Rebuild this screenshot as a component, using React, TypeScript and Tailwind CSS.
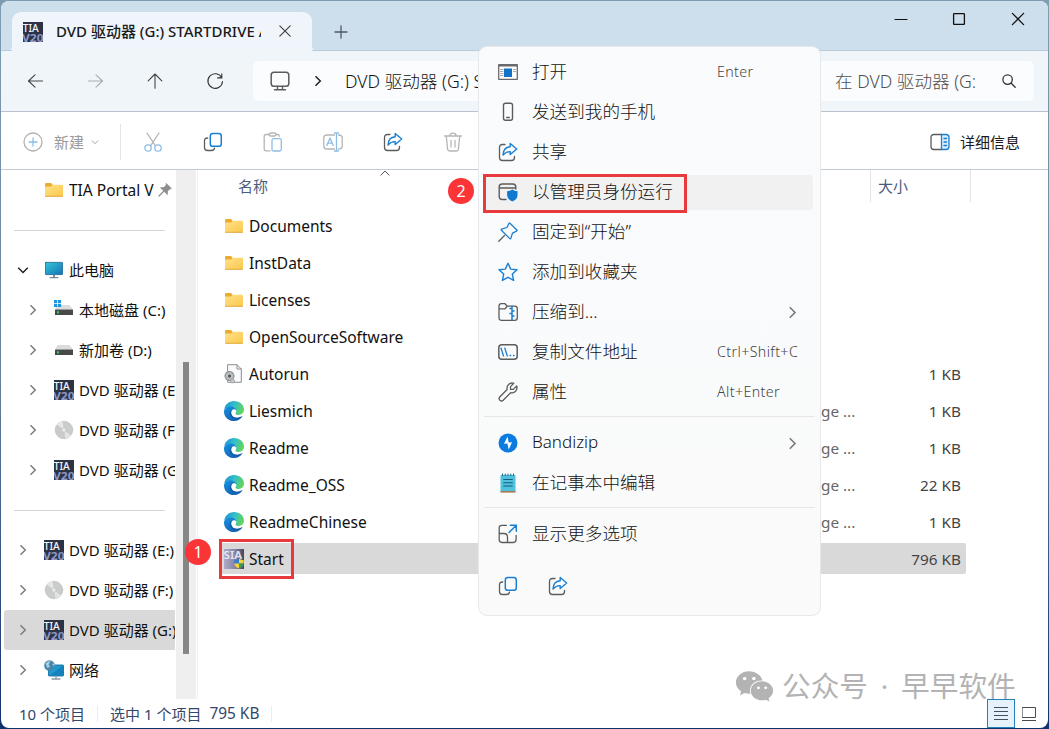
import type { ReactNode } from "react"
import { FaWeixin } from "react-icons/fa"

const BLUE = "#1a7fd0"
const GRAY = "#5c5c5c"

interface IconProps {
  w?: number
  h?: number
  className?: string
  children: ReactNode
}

// Stroke icon, one unit per pixel
function Icon({ w = 20, h = 20, className, children }: IconProps) {
  return (
    <svg
      width={w}
      height={h}
      viewBox={`0 0 ${w} ${h}`}
      fill="none"
      stroke={GRAY}
      strokeWidth="1.3"
      strokeLinecap="round"
      strokeLinejoin="round"
      className={`block shrink-0 ${className ?? ""}`}
    >
      {children}
    </svg>
  )
}

function TiaIcon() {
  return (
    <Icon>
      <rect width="20" height="20" fill="#2c3347" stroke="none" />
      <text x="-0.3" y="9.800" fontSize="10.500" fontWeight="500" fontFamily="Noto Sans, sans-serif" fill="#f4f6fa" stroke="none" textLength="16" lengthAdjust="spacingAndGlyphs">TIA</text>
      <text x="-1" y="19.600" fontSize="11" fontWeight="700" fontFamily="Noto Sans, sans-serif" fill="#8c98c6" stroke="none" textLength="21.500" lengthAdjust="spacingAndGlyphs">V20</text>
    </Icon>
  )
}

function FolderIcon() {
  return (
    <Icon w={18} h={16}>
      <defs>
        <linearGradient id="folder" x1="0" y1="0" x2="1" y2="1">
          <stop offset="0" stopColor="#ffe08a" />
          <stop offset="1" stopColor="#fbc94c" />
        </linearGradient>
      </defs>
      <path d="M0 2.2Q0 1 1.2 1H6l1.6 1.8V6H0z" fill="#e9ac2c" stroke="none" />
      <path d="M0 4.6h6l1.8-1.8h9q1.2 0 1.2 1.2v9.3q0 1.2-1.2 1.2H1.2Q0 14.500 0 13.300z" fill="url(#folder)" stroke="none" />
      <path d="M.5 14.300h17" stroke="#dfa336" strokeWidth="0.900" />
    </Icon>
  )
}

function EdgeIcon() {
  return (
    <Icon>
      <defs>
        <linearGradient id="edge-top" x1="0" y1="0.200" x2="1" y2="0.500">
          <stop offset="0" stopColor="#1c93d6" />
          <stop offset="0.500" stopColor="#35bfc9" />
          <stop offset="1" stopColor="#63d65a" />
        </linearGradient>
        <linearGradient id="edge-low" x1="0" y1="0" x2="0.600" y2="1">
          <stop offset="0" stopColor="#1592df" />
          <stop offset="1" stopColor="#1461b4" />
        </linearGradient>
      </defs>
      <path d="M.2 8.500C1 3.500 5 0 10 0c5.800 0 10 4 10 8.500 0 3.200-2.400 5.400-5.300 5.400-2 0-3.300-.7-3.300-1.500 0-.6.900-.9.900-2.400C12.300 7.600 9.800 6 7 6 4 6 1.400 7.200.2 8.500z" fill="url(#edge-top)" stroke="none" />
      <path d="M0 10.200C.4 7.400 3.400 5.400 6.800 5.400c3 0 5.500 1.700 5.500 4.200C11.500 8.300 10.300 7.900 9.300 8.300 7.700 9 6.900 10.600 7.200 12.400c.5 2.900 3.200 4.500 6.300 4.300 2-.1 3.800-.9 5.200-2C17.200 17.900 14 20 10 20 4.300 20-.3 15.500 0 10.200z" fill="url(#edge-low)" stroke="none" />
      <path d="M9.300 8.300C7.700 9 6.900 10.600 7.200 12.400c.5 2.900 3.200 4.500 6.300 4.300 2-.1 3.800-.9 5.200-2-2.400 3.200-7.600 4.400-11 1.600C4.800 13.800 5 9.600 9.300 8.300z" fill="#104f98" fillOpacity="0.700" stroke="none" />
    </Icon>
  )
}

function SetupFileIcon() {
  return (
    <Icon>
      <path d="M4 .7h9L17.300 5v13.300H4z" fill="#fafafa" stroke="#8d8d8d" strokeWidth="1" />
      <path d="M13 .7V5h4.300" stroke="#8d8d8d" strokeWidth="1" />
      <circle cx="5.500" cy="12" r="4.400" fill="#b9bdbf" stroke="#8f9496" strokeDasharray="2 1.200" />
      <circle cx="5.500" cy="12" r="1.500" fill="#4d5356" stroke="none" />
      <circle cx="8.500" cy="17" r="2" fill="#c7cacb" stroke="#9a9fa1" strokeWidth="0.800" />
    </Icon>
  )
}

function StartIcon() {
  return (
    <Icon>
      <defs>
        <linearGradient id="sia" x1="0" x2="1">
          <stop offset="0" stopColor="#adabc9" />
          <stop offset="0.550" stopColor="#8683a5" />
          <stop offset="1" stopColor="#45465c" />
        </linearGradient>
      </defs>
      <rect width="20" height="20" fill="url(#sia)" stroke="none" />
      <text x="-0.500" y="9.800" fontSize="10.500" fontWeight="600" fontFamily="Noto Sans, sans-serif" fill="#e6e6f2" stroke="none" textLength="18.500" lengthAdjust="spacingAndGlyphs">SIA</text>
      <path d="M15 9.500v5h-4.700v-3.200Q13 11.200 15 9.500z" fill="#2f7fd0" stroke="none" />
      <path d="M15 9.500v5h4.700v-3.200Q17 11.200 15 9.500z" fill="#f5d33c" stroke="none" />
      <path d="M15 19.500v-5h-4.700Q10.800 18 15 19.500z" fill="#f5d33c" stroke="none" />
      <path d="M15 19.500v-5h4.700Q19.200 18 15 19.500z" fill="#3f9b5a" stroke="none" />
    </Icon>
  )
}

function MonitorIcon() {
  return (
    <Icon w={18} h={18}>
      <defs>
        <linearGradient id="screen" x1="0" y1="0" x2="1" y2="1">
          <stop offset="0" stopColor="#35c6d6" />
          <stop offset="1" stopColor="#1173b8" />
        </linearGradient>
      </defs>
      <rect x="0.400" y="1.400" width="17.200" height="12.200" rx="0.600" fill="url(#screen)" stroke="#17618f" strokeWidth="0.800" />
      <path d="M9 14v2" stroke="#7b8b96" strokeWidth="2" strokeLinecap="butt" />
      <path d="M5 16.600h8" stroke="#7b8b96" strokeWidth="1.200" />
    </Icon>
  )
}

function DriveIcon({ windows }: { windows?: boolean }) {
  return (
    <Icon>
      <path d="M3.500 5h12l3.500 4.600H1z" fill="#dcdcdc" stroke="none" />
      {windows && (
        <path d="M0 0h3.200v3.200H0zM3.900 0h3.200v3.200H3.900zM0 3.900h3.200v3.200H0zM3.900 3.900h3.200v3.200H3.900z" fill="#2196e0" stroke="none" />
      )}
      <rect x="1" y="9.500" width="18" height="5.500" rx="0.600" fill="#47494a" stroke="none" />
      <rect x="3" y="11.300" width="2" height="2" fill="#45d255" stroke="none" />
    </Icon>
  )
}

function DiscIcon() {
  return (
    <Icon>
      <circle cx="10" cy="10" r="8.800" fill="#c9cccb" stroke="#bbbdbc" strokeWidth="0.600" />
      <path d="M10 10 3 4.600A8.800 8.800 0 0 1 8.500 1.300z" fill="#e6e8e7" stroke="none" />
      <path d="m10 10 7 5.400a8.800 8.800 0 0 1-5.500 3.300z" fill="#e2e4e3" stroke="none" />
      <circle cx="10" cy="10" r="2.300" fill="#e9ebea" stroke="#bfc2c1" strokeWidth="0.700" />
    </Icon>
  )
}

function NetworkIcon() {
  return (
    <Icon>
      <rect x="4.500" y="5" width="15" height="11" rx="0.600" fill="#1b9bd0" stroke="#16719f" strokeWidth="0.900" />
      <path d="M19 5.500v10H6z" fill="#1580ba" stroke="none" />
      <path d="M12 16.500V18M8 19h8" stroke="#8a9ba5" />
      <circle cx="5.500" cy="5.500" r="5.300" fill="#4787ab" stroke="none" />
      <path d="M1.500 3.500Q4 .6 6.500 1L4.600 4.400 6 6.600 3.500 8.200z" fill="#a8d4e2" stroke="none" />
      <path d="m8 4 2.300-.6v3z" fill="#9bcbdd" stroke="none" />
    </Icon>
  )
}

function CopyIcon() {
  return (
    <Icon>
      <path d="M4.700 6H4.300Q1.500 6 1.500 8.800v6.700Q1.500 18.500 4.500 18.500h4q2.600 0 3-2.300" />
      <rect x="7.300" y="1.500" width="11" height="12.800" rx="2.600" stroke={BLUE} strokeWidth="1.500" />
    </Icon>
  )
}

function ShareIcon() {
  return (
    <Icon>
      <path d="M7 2.500H4.500q-3 0-3 3v10q0 3 3 3h9q3 0 3-3v-1" />
      <path d="M12.200 1.500 18.700 7l-6.500 5.500V9.600C9.300 9.500 7 10.600 5 13 5.200 8.500 7.800 5 12.200 4.700z" stroke={BLUE} strokeWidth="1.400" />
    </Icon>
  )
}

function Chevron({ dir, color = "#7a7a7a", size = 12 }: { dir: "right" | "down"; color?: string; size?: number }) {
  return (
    <svg width={size} height={size} viewBox="0 0 12 12" fill="none" stroke={color} strokeWidth="1.500" className="block shrink-0">
      <path d={dir === "right" ? "M3.500 1.200 8.300 6 3.500 10.800" : "M1.200 3.700 6 8.500l4.800-4.800"} />
    </svg>
  )
}

function TitleBar() {
  return (
    <div className="flex h-[50px] shrink-0 justify-between border-b border-[#bccbdb] bg-[#cddeec]">
      <div className="flex pl-[7px] pt-[11px]">
        <Icon w={4} h={4} className="self-end"><path d="M4 0v4H0Q4 4 4 0z" fill="#f0f5fb" stroke="none" /></Icon>
        <div className="flex h-[39px] w-[300px] items-center rounded-t-[9px] bg-[#f0f5fb] pl-[11px]">
          <TiaIcon />
          <span className="ml-[13px] w-[205px] overflow-hidden whitespace-nowrap pb-[2px] text-[15px] font-medium leading-5 text-[#1b1b1b]">
            DVD 驱动器 (G:) STARTDRIVE Advanced
          </span>
          <Icon w={12} h={12} className="mb-px ml-[18px]">
            <path d="m.8.800 10.400 10.400M11.200.800.800 11.200" stroke="#3c3c3c" strokeWidth="1.100" />
          </Icon>
        </div>
        <Icon w={4} h={4} className="self-end"><path d="M0 0v4h4Q0 4 0 0z" fill="#f0f5fb" stroke="none" /></Icon>
        <Icon w={14} h={14} className="ml-[18px] mt-[13px]">
          <path d="M7 1v12M1 7h12" stroke="#4f5a65" />
        </Icon>
      </div>
      <div className="flex items-start pr-[23px] pt-[11px]">
        <Icon w={14} h={14} className="mr-[44px]">
          <path d="M1 7.500h12" stroke="#111" strokeWidth="1" />
        </Icon>
        <Icon w={14} h={14} className="mr-[45px]">
          <rect x="1.600" y="1.600" width="10.800" height="10.800" rx="0.600" stroke="#111" strokeWidth="1.300" />
        </Icon>
        <Icon w={14} h={14}>
          <path d="m1.400 1.400 11.200 11.200M12.600 1.400 1.400 12.600" stroke="#111" />
        </Icon>
      </div>
    </div>
  )
}

function NavBar() {
  return (
    <div className="flex h-[61px] shrink-0 items-center border-b border-[#b9c3cf] bg-[#f0f5fa] pl-[26px] pr-[14px]">
      <Icon w={16} h={16}><path d="M15.500 8H1.500M8 1.800 1.500 8 8 14.200" stroke="#444" strokeWidth="1.100" /></Icon>
      <Icon w={16} h={16} className="ml-[45px]"><path d="M.5 8h14M8 1.800 14.500 8 8 14.200" stroke="#a9adb1" strokeWidth="1.100" /></Icon>
      <Icon w={16} h={16} className="ml-[43px]"><path d="M8 15.300V1M1.200 7.800 8 1l6.800 6.800" stroke="#444" strokeWidth="1.100" /></Icon>
      <Icon w={18} h={18} className="ml-[43px]">
        <path d="M15.600 5.500A7.300 7.300 0 1 0 16.500 9.500M15.800 1.800v4.100h-4.200" stroke="#333" strokeWidth="1.100" />
      </Icon>
      <div className="ml-[29px] flex h-10 w-[554px] items-center rounded-md bg-[#fbfcfe] pl-[17px]">
        <Icon className="mb-px">
          <rect x="1.200" y="1.200" width="17.600" height="14" rx="2.800" strokeWidth="1.500" />
          <path d="M7.500 15.500v3M12.500 15.500v3M4.500 18.700h11" strokeWidth="1.400" />
        </Icon>
        <span className="ml-[22px]"><Chevron dir="right" color="#222" /></span>
        <span className="ml-[21px] w-[134px] overflow-hidden whitespace-nowrap text-[17.600px] font-light leading-6 text-[#111]">DVD 驱动器 (G:) STARTDRIVE</span>
      </div>
      <div className="ml-[10px] flex h-10 grow items-center justify-between rounded-md bg-[#fbfcfe] pl-[18px] pr-[18px]">
        <span className="w-[142px] overflow-hidden whitespace-nowrap text-[17.600px] font-light leading-6 text-[#4f4f4f]">在 DVD 驱动器 (G:</span>
        <Icon w={14} h={14}>
          <circle cx="5.600" cy="5.600" r="4.700" stroke="#333" />
          <path d="m9.200 9.200 4 4" stroke="#333" />
        </Icon>
      </div>
    </div>
  )
}

function Toolbar() {
  return (
    <div className="flex h-[58px] shrink-0 items-center border-b border-[#c3cad2] bg-white pl-[22px] pr-[28px] pt-[2px]">
      <Icon>
        <circle cx="10" cy="10" r="9" stroke="#b0b0b0" />
        <path d="M10 6v8M6 10h8" stroke="#8cbde8" />
      </Icon>
      <span className="ml-[11px] text-[15px] leading-5 text-[#9a9a9a]">新建</span>
      <span className="ml-[7px]"><Chevron dir="down" color="#a3a3a3" size={8} /></span>
      <span className="ml-[21px] h-9 w-px bg-[#e4e4e4]" />
      <Icon className="ml-[22px]">
        <path d="M4 1l8.300 12.600M16 1 7.700 13.600" stroke="#b5b5b5" />
        <circle cx="5" cy="16" r="3.200" stroke="#8cbde8" />
        <circle cx="15" cy="16" r="3.200" stroke="#8cbde8" />
      </Icon>
      <span className="ml-10"><CopyIcon /></span>
      <Icon className="ml-10">
        <path d="M6 2.500H3.200q-2 0-2 2v12.300q0 2 2 2H7M13 2.500h1.500q1.800 0 1.800 1.800" stroke="#b5b5b5" />
        <rect x="6" y="1" width="7" height="3" rx="1.500" stroke="#b5b5b5" />
        <rect x="9" y="6.700" width="9.300" height="12.300" rx="1.500" stroke="#8cbde8" />
      </Icon>
      <Icon className="ml-10">
        <path d="M11.500 3H4Q.8 3 .8 6v8q0 3 3.200 3h7.500M15.500 3q3.700 0 3.700 3v8q0 3-3.700 3" stroke="#b5b5b5" />
        <path d="M13.500 1v18M11.500 1h4M11.500 19h4M3.800 13.500 7 6l3.200 7.500M5 11.200h4" stroke="#8cbde8" />
      </Icon>
      <span className="ml-10"><ShareIcon /></span>
      <Icon className="ml-10">
        <path d="M1.500 4h17M7 3.700q0-2.500 3-2.500t3 2.500M3.300 4.300l1.300 12.800q.2 1.900 2 1.900h6.800q1.800 0 2-1.900l1.300-12.800M8 8.500v6.500M12 8.500v6.500" stroke="#b5b5b5" />
      </Icon>
      <div className="ml-auto flex items-center gap-[10px]">
        <Icon>
          <path d="M11.500 2.500H4q-3 0-3 3v9q0 3 3 3h7.500" />
          <path d="M11.500 2.500H16q3 0 3 3v9q0 3-3 3h-4.500z" fill="#d8ecfb" stroke={BLUE} />
          <path d="M14 6.500h2.500M14 10h2.500M14 13.500h2.500" stroke={BLUE} />
        </Icon>
        <span className="text-[15px] leading-5 text-[#1b1b1b]">详细信息</span>
      </div>
    </div>
  )
}

interface TreeRow {
  label: string
  icon: ReactNode
  nested?: boolean
  open?: boolean
  selected?: boolean
}

const devices: TreeRow[] = [
  { label: "此电脑", icon: <MonitorIcon />, open: true },
  { label: "本地磁盘 (C:)", icon: <DriveIcon windows />, nested: true },
  { label: "新加卷 (D:)", icon: <DriveIcon />, nested: true },
  { label: "DVD 驱动器 (E:)", icon: <TiaIcon />, nested: true },
  { label: "DVD 驱动器 (F:)", icon: <DiscIcon />, nested: true },
  { label: "DVD 驱动器 (G:)", icon: <TiaIcon />, nested: true },
]

const drives: TreeRow[] = [
  { label: "DVD 驱动器 (E:)", icon: <TiaIcon /> },
  { label: "DVD 驱动器 (F:)", icon: <DiscIcon /> },
  { label: "DVD 驱动器 (G:)", icon: <TiaIcon />, selected: true },
  { label: "网络", icon: <NetworkIcon /> },
]

function TreeItem({ label, icon, nested, open, selected }: TreeRow) {
  return (
    <div className={`ml-[3px] flex h-10 items-center overflow-hidden rounded-l-[3px] ${nested ? "pl-[23px]" : "pl-[13px]"} ${selected ? "bg-[#d9d9d9]" : ""}`}>
      <Chevron dir={open ? "down" : "right"} color={open ? "#222" : "#7d7d7d"} />
      <span className="ml-[15px] flex w-5 shrink-0 justify-center">{icon}</span>
      <span className="ml-[5px] whitespace-nowrap text-[15px] leading-5 text-[#111]">{label}</span>
    </div>
  )
}

function Sidebar() {
  return (
    <div className="flex w-[197px] shrink-0 border-r border-[#f1f1f1]">
      <div className="w-[174px] shrink-0 overflow-hidden">
        <div className="flex h-10 items-center pl-[44px]">
          <FolderIcon />
          <span className="ml-[6px] w-[85px] overflow-hidden whitespace-nowrap text-[15.500px] leading-5 text-[#111]">TIA Portal V</span>
          <Icon w={14} h={14} className="ml-1">
            <path d="M8.500.700 13.300 5.500 11.500 6 9.500 8.200 9.300 11.500 2.500 4.700 5.800 4.500 8 2.500z" fill="#8d8d8d" stroke="#8d8d8d" strokeWidth="0.800" />
            <path d="M5.500 8.500 1 13" stroke="#8d8d8d" strokeWidth="1.200" />
          </Icon>
        </div>
        <div className="mb-[19px] ml-[13px] mr-[10px] mt-5 h-px bg-[#d4d4d4]" />
        {devices.map((row) => <TreeItem key={row.label} {...row} />)}
        <div className="mb-[19px] ml-[13px] mr-[10px] mt-5 h-px bg-[#d4d4d4]" />
        {drives.map((row) => <TreeItem key={row.label} {...row} />)}
      </div>
      <div className="ml-px flex w-5 justify-center bg-[#efefef] pt-[192px]">
        <div className="h-[292px] w-[6px] bg-[#868686]" />
      </div>
    </div>
  )
}

interface FileRow {
  name: string
  icon: ReactNode
  type?: string
  size?: string
  selected?: boolean
}

const files: FileRow[] = [
  { name: "Documents", icon: <FolderIcon /> },
  { name: "InstData", icon: <FolderIcon /> },
  { name: "Licenses", icon: <FolderIcon /> },
  { name: "OpenSourceSoftware", icon: <FolderIcon /> },
  { name: "Autorun", icon: <SetupFileIcon />, size: "1 KB" },
  { name: "Liesmich", icon: <EdgeIcon />, type: "ge ...", size: "1 KB" },
  { name: "Readme", icon: <EdgeIcon />, type: "ge ...", size: "1 KB" },
  { name: "Readme_OSS", icon: <EdgeIcon />, type: "ge ...", size: "22 KB" },
  { name: "ReadmeChinese", icon: <EdgeIcon />, type: "ge ...", size: "1 KB" },
  { name: "Start", icon: <StartIcon />, size: "796 KB", selected: true },
]

function FileList() {
  return (
    <div className="min-w-0 grow">
      <div className="flex h-[37px] text-[15px] leading-5 text-[#4a5d7c]">
        <span className="w-[146px] pl-10 pt-[6px]">名称</span>
        <Icon w={10} h={6} className="ml-9"><path d="M.8 5.200 5 1l4.200 4.200" stroke="#555" strokeWidth="1" /></Icon>
        <div className="ml-auto mr-[77px] flex h-[32px] w-[101px] border-x border-[#e3e3e3] pl-[7px] pt-[6px]">大小</div>
      </div>
      {files.map((file) => (
        <div key={file.name} className="flex h-[37px] items-center pl-[21px]">
          <div className={`flex h-[31px] w-[747px] items-center rounded-[2px] pl-[5px] pr-[5px] ${file.selected ? "bg-[#d9d9d9]" : ""}`}>
            <span className="flex w-5 shrink-0 justify-center">{file.icon}</span>
            <span className="ml-[5px] w-[572px] text-[15.500px] leading-5 text-[#111]">{file.name}</span>
            <span className="text-[15.300px] leading-5 text-[#666]">{file.type}</span>
            <span className="ml-auto text-[15.300px] leading-5 text-[#444]">{file.size}</span>
          </div>
        </div>
      ))}
    </div>
  )
}

function StatusBar() {
  return (
    <div className="flex h-[29px] shrink-0 items-center pl-[18px] pr-[12px] text-[15px] leading-5 text-[#34476a]">
      <span>10 个项目</span>
      <span className="ml-3 h-4 w-px bg-[#ececec]" />
      <span className="ml-3">选中 1 个项目</span>
      <span className="ml-[8px] text-[15.400px]">795 KB</span>
      <span className="ml-3 h-4 w-px bg-[#ececec]" />
      <div className="z-10 ml-auto flex items-center">
        <div className="flex h-[29px] w-7 items-center justify-center border border-[#2380b8] bg-[#e5f2fb]">
          <Icon w={14} h={14}><path d="M0 .5h14M0 4.500h14M0 8.500h14M0 12.500h14" stroke="#44525f" strokeWidth="1" strokeLinecap="butt" /></Icon>
        </div>
        <Icon w={14} h={16} className="ml-[7px]">
          <rect x="0.500" y="1.500" width="13" height="10" strokeWidth="1" stroke="#4b4b4b" />
          <path d="M0 14.500h14" stroke="#4b4b4b" strokeWidth="1" />
        </Icon>
      </div>
    </div>
  )
}

const menuIcons = {
  open: (
    <Icon>
      <rect x="0.700" y="2.700" width="18.600" height="14.600" fill="#fff" stroke="#6a6a6a" />
      <path d="M1 3.700h18" stroke="#6a6a6a" strokeWidth="1.600" />
      <path d="M2.500 7.500h2.500M2.500 9.500h2.500M2.500 11.500h2.500M2.500 13.500h2.500M15.500 7.500h2M15.500 9.500h2" stroke="#999" strokeWidth="0.900" />
      <rect x="6" y="6.500" width="8" height="8.500" fill="#1272c8" stroke="none" />
    </Icon>
  ),
  phone: (
    <Icon>
      <rect x="5.500" y="1.200" width="9" height="17" rx="2" strokeWidth="1.400" />
      <path d="M8.700 15.500h2.600" />
    </Icon>
  ),
  admin: (
    <Icon>
      <path d="M8 17.500H4.200q-3 0-3-3V5q0-3 3-3h10.600q3 0 3 3v2M1.500 6h16" strokeWidth="1.400" />
      <path d="M14.300 7.500q2.200 1.600 5.200 1.700v3.800q0 4.500-5.200 6.500-5.200-2-5.200-6.500V9.200q3-.1 5.200-1.700z" fill="#0f78d0" stroke="none" />
    </Icon>
  ),
  pin: (
    <Icon>
      <path d="M6.500 13.500.8 19.200" />
      <path d="M12 1.200 18.800 8q.5.700-.3 1.100l-4 2-1.700 5.300q-.4.800-1 .2L3.400 8.200q-.6-.6.2-1l5.300-1.700 2-4q.5-.8 1.100-.3z" stroke={BLUE} />
    </Icon>
  ),
  star: (
    <Icon>
      <path d="m10 1.200 2.700 5.900 6.300.7-4.700 4.300 1.300 6.300L10 15.300l-5.600 3.100 1.300-6.300L1 7.800l6.300-.7z" stroke={BLUE} strokeWidth="1.400" />
    </Icon>
  ),
  zip: (
    <Icon>
      <path d="M1 7V4q0-2.300 2.300-2.300H7l2.300 2.500h7.400q2.600 0 2.600 2.600v8.900q0 2.600-2.600 2.600H3.500Q1 18.300 1 15.700zM1 6.800h6l2.300-2.600" />
      <path d="M14 4.200v13.800M12 6.500h2M14 9h2M12 11.500h2M14 14h2" stroke={BLUE} strokeWidth="1.500" />
    </Icon>
  ),
  path: (
    <Icon>
      <rect x="0.800" y="2.700" width="18.400" height="14.600" rx="3" strokeWidth="1.500" />
      <path d="m3 6 2.500 8M6.800 6l2.500 8M12 13.500h.600M15.500 13.500h.600" stroke={BLUE} />
    </Icon>
  ),
  wrench: (
    <Icon>
      <path d="M15.800 1.300 12.500 4.600v2.800h2.800l3.400-3.400c1.300 3.800-2 7.800-6 6.700L5.200 18.300c-2.200 2-5.400-1-3.500-3.300l7.400-7.500C8.300 3.300 12 0 15.800 1.300z" />
    </Icon>
  ),
  bandizip: (
    <Icon>
      <circle cx="10" cy="10" r="9.500" fill="#0b7be0" stroke="none" />
      <path d="M9.600 3.500 6 10.800l3.400-.2 1.300 6L14 9.200l-3.400.4z" fill="#fff" stroke="none" />
    </Icon>
  ),
  notepad: (
    <Icon>
      <rect x="2.500" y="2" width="15" height="17" rx="1" fill="#4fc1dc" stroke="none" />
      <path d="M2.500 18h15v1.600h-15z" fill="#a87855" stroke="none" />
      <path d="M4.500 1v1.500M7.300 1v1.500M10 1v1.500M12.800 1v1.500M15.500 1v1.500" stroke="#1c6788" strokeWidth="1.100" />
      <path d="M5.700 6.500h8.600M5.700 9.800h8.600M5.700 13h8.600" stroke="#155f80" strokeWidth="1.100" />
    </Icon>
  ),
  more: (
    <Icon>
      <path d="M8.500 1.300H4q-2.800 0-2.800 2.800v11.500q0 2.900 2.800 2.900h11.200q2.900 0 2.900-2.900v-4.200M1.200 9.500h4.500q3.800 0 3.800 3.800v5" />
      <path d="M11 8.500 18.300 1.300M12.300 1.300h6v6" stroke={BLUE} strokeWidth="1.500" />
    </Icon>
  ),
}

interface MenuEntry {
  label: string
  icon: ReactNode
  shortcut?: string
  submenu?: boolean
  active?: boolean
}

const menuGroups: MenuEntry[][] = [
  [
    { label: "打开", icon: menuIcons.open, shortcut: "Enter" },
    { label: "发送到我的手机", icon: menuIcons.phone },
    { label: "共享", icon: <ShareIcon /> },
    { label: "以管理员身份运行", icon: menuIcons.admin, active: true },
    { label: "固定到“开始”", icon: menuIcons.pin },
    { label: "添加到收藏夹", icon: menuIcons.star },
    { label: "压缩到...", icon: menuIcons.zip, submenu: true },
    { label: "复制文件地址", icon: menuIcons.path, shortcut: "Ctrl+Shift+C" },
    { label: "属性", icon: menuIcons.wrench, shortcut: "Alt+Enter" },
  ],
  [
    { label: "Bandizip", icon: menuIcons.bandizip, submenu: true },
    { label: "在记事本中编辑", icon: menuIcons.notepad },
  ],
  [{ label: "显示更多选项", icon: menuIcons.more }],
]

function ContextMenu() {
  return (
    <div className="absolute left-[478px] top-[46px] h-[570px] w-[343px] rounded-[9px] border border-[#e6e8eb] bg-linear-to-b from-[#f9fbfd] to-[#fafafa] pt-[5px]">
      {menuGroups.map((group, i) => (
        <div key={group[0].label}>
          {i > 0 && <div className="mx-[5px] mb-[6px] mt-[4px] h-px bg-[#e6e6e6]" />}
          {group.map((item) => (
            <div key={item.label} className="flex h-10 items-center px-[5px]">
              <div className={`flex h-[35px] w-[329px] items-center rounded-[3px] pl-[14px] ${item.active ? "bg-[#f1f1f1]" : ""}`}>
                {item.icon}
                <span className={`ml-[14px] w-[185px] whitespace-nowrap pb-[2px] font-light leading-6 text-[#111] ${item.label === "Bandizip" ? "text-[17px]" : "text-[17.600px]"}`}>
                  {item.label}
                </span>
                {item.shortcut && <span className="whitespace-nowrap text-[14.200px] font-light leading-5 tracking-[0.400px] text-[#444]">{item.shortcut}</span>}
                {item.submenu && <span className="ml-[69px]"><Chevron dir="right" size={13} /></span>}
              </div>
            </div>
          ))}
        </div>
      ))}
      <div className="flex gap-[30px] pl-[19px] pt-[22px]">
        <CopyIcon />
        <ShareIcon />
      </div>
    </div>
  )
}

function StepBadge({ step, className }: { step: number; className: string }) {
  return (
    <div className={`absolute flex size-[26px] items-center justify-center rounded-full bg-[#fb3437] pb-px text-[16px] leading-none text-white ${className}`}>
      {step}
    </div>
  )
}

export default function App() {
  return (
    <div className="relative h-[729px] w-[1049px] overflow-hidden bg-linear-to-b from-[#7e9db1] via-[#6a83a1] to-[#12306e] px-px pt-px font-['Noto_Sans','Noto_Sans_CJK_SC',sans-serif]">
      <div className="flex h-[727px] flex-col overflow-hidden rounded-[8px] bg-white">
        <TitleBar />
        <NavBar />
        <Toolbar />
        <div className="flex h-[529px] shrink-0">
          <Sidebar />
          <FileList />
        </div>
        <StatusBar />
      </div>

      <div className="absolute left-[735px] top-[668px] flex items-center text-[#b3b3b3]">
        <FaWeixin className="h-[35px] w-[39px]" />
        <span className="ml-2 text-[28.700px] leading-9">公众号</span>
        <span className="w-[33px] text-center text-[28px] leading-9">·</span>
        <span className="text-[28.700px] leading-9">早早软件</span>
      </div>

      <ContextMenu />

      <div className="absolute left-[219px] top-[539px] h-10 w-[75px] border-[3px] border-[#e8393d]" />
      <div className="absolute left-[483px] top-[174px] h-[39px] w-[204px] border-[3px] border-[#e8393d]" />
      <StepBadge step={1} className="left-[185px] top-[539px]" />
      <StepBadge step={2} className="left-[448px] top-[178px]" />
    </div>
  )
}
